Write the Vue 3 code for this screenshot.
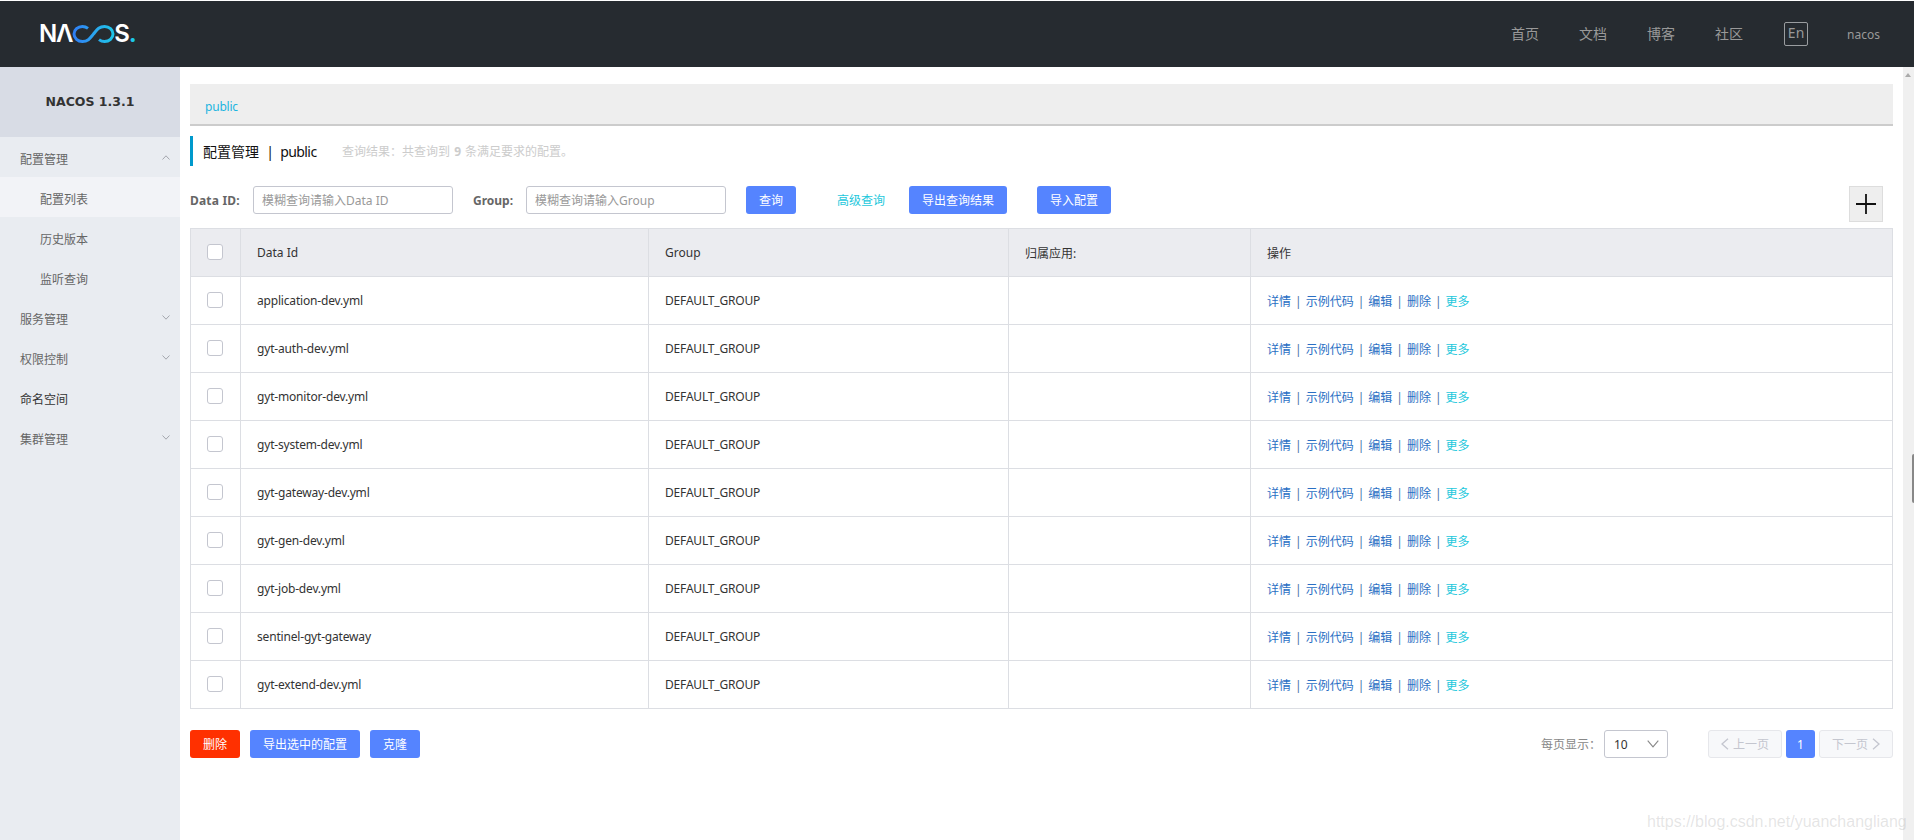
<script setup>
const nav = ['首页', '文档', '博客', '社区']
const rows = [
  'application-dev.yml', 'gyt-auth-dev.yml', 'gyt-monitor-dev.yml', 'gyt-system-dev.yml',
  'gyt-gateway-dev.yml', 'gyt-gen-dev.yml', 'gyt-job-dev.yml', 'sentinel-gyt-gateway', 'gyt-extend-dev.yml'
]
const actions = ['详情', '示例代码', '编辑', '删除']
const menu = [
  { label: '配置管理', arrow: 'up', top: true },
  { label: '配置列表', sub: true, active: true },
  { label: '历史版本', sub: true },
  { label: '监听查询', sub: true },
  { label: '服务管理', arrow: 'down' },
  { label: '权限控制', arrow: 'down' },
  { label: '命名空间', plain: true },
  { label: '集群管理', arrow: 'down' }
]
</script>

<template>
  <div class="page">
    <header class="top">
      <div class="logo">
        <span class="logo-t">NΛ</span>
        <svg class="inf" width="43" height="18" viewBox="0 0 43 18" fill="none">
          <defs>
            <linearGradient id="lg" x1="0" y1="0" x2="43" y2="0" gradientUnits="userSpaceOnUse">
              <stop offset="0" stop-color="#2f7bf5" />
              <stop offset="0.55" stop-color="#2aa8ee" />
              <stop offset="1" stop-color="#1cc8e8" />
            </linearGradient>
          </defs>
          <path d="M16 3.400C14.300 2.100 12.400 1.500 10.400 1.500 5.800 1.500 2 4.900 2 9s3.800 7.500 8.400 7.500c6 0 8.100-3.900 11.100-7.500s5.100-7.500 11.100-7.500C37.200 1.500 41 4.900 41 9s-3.800 7.500-8.400 7.500c-2 0-3.900-.6-5.600-1.900" stroke="url(#lg)" stroke-width="3" />
        </svg>
        <span class="logo-t logo-s">S</span><span class="logo-dot">.</span>
      </div>
      <nav class="nav">
        <a v-for="n in nav" :key="n" class="nav-link">{{ n }}</a>
        <span class="lang">En</span>
        <span class="user">nacos</span>
      </nav>
    </header>

    <div class="body">
      <aside class="side">
        <div class="side-head">NACOS 1.3.1</div>
        <div
          v-for="m in menu"
          :key="m.label"
          class="side-item"
          :class="{ sub: m.sub, active: m.active, plain: m.plain }"
        >
          <span class="side-label">{{ m.label }}</span>
          <svg v-if="m.arrow" class="side-arrow" width="8" height="5" viewBox="0 0 8 5" fill="none">
            <path v-if="m.arrow === 'up'" d="M.5 4.500L4 .8l3.500 3.700" stroke="#a3a6ad" />
            <path v-else d="M.5.5L4 4.200 7.500.5" stroke="#a3a6ad" />
          </svg>
        </div>
      </aside>

      <main class="main">
        <div class="ns-bar"><span class="ns">public</span></div>

        <div class="title">
          <span class="title-main">配置管理&nbsp;&nbsp;|&nbsp;&nbsp;<span class="tight">public</span></span>
          <span class="title-sub">查询结果：共查询到 <b>9</b> 条满足要求的配置。</span>
        </div>

        <div class="search">
          <label class="lbl lbl-id">Data ID:</label>
          <input class="inp" placeholder="模糊查询请输入Data ID" />
          <label class="lbl lbl-group">Group:</label>
          <input class="inp" placeholder="模糊查询请输入Group" />
          <button class="btn btn-query">查询</button>
          <a class="adv">高级查询</a>
          <button class="btn btn-export">导出查询结果</button>
          <button class="btn btn-import">导入配置</button>
          <button class="plus" aria-label="add">
            <svg width="20" height="20" viewBox="0 0 20 20"><path d="M0 10h20M10 0v20" stroke="#111" stroke-width="1.800" /></svg>
          </button>
        </div>

        <table class="tbl">
          <colgroup>
            <col class="c0" /><col class="c1" /><col class="c2" /><col class="c3" /><col />
          </colgroup>
          <thead>
            <tr>
              <th><span class="check"></span></th>
              <th>Data Id</th>
              <th>Group</th>
              <th>归属应用:</th>
              <th>操作</th>
            </tr>
          </thead>
          <tbody>
            <tr v-for="r in rows" :key="r">
              <td><span class="check"></span></td>
              <td class="tight">{{ r }}</td>
              <td class="tight">DEFAULT_GROUP</td>
              <td></td>
              <td>
                <template v-for="a in actions" :key="a">
                  <a class="act">{{ a }}</a><span class="sep">|</span>
                </template>
                <a class="more">更多</a>
              </td>
            </tr>
          </tbody>
        </table>

        <div class="foot">
          <button class="btn btn-del">删除</button>
          <button class="btn btn-exp2">导出选中的配置</button>
          <button class="btn btn-clone">克隆</button>
          <span class="per">每页显示：</span>
          <div class="select">
            <span>10</span>
            <svg width="12" height="8" viewBox="0 0 12 8" fill="none"><path d="M.7.7L6 6.800 11.300.7" stroke="#888" stroke-width="1.100" /></svg>
          </div>
          <button class="pg pg-prev">
            <svg width="8" height="12" viewBox="0 0 8 12" fill="none"><path d="M7 .7L1 6l6 5.300" stroke="#c4c6cf" stroke-width="1.300" /></svg>
            上一页
          </button>
          <button class="pg-cur">1</button>
          <button class="pg">
            下一页
            <svg width="8" height="12" viewBox="0 0 8 12" fill="none"><path d="M1 .7L7 6l-6 5.300" stroke="#c4c6cf" stroke-width="1.300" /></svg>
          </button>
        </div>
      </main>
    </div>

    <div class="scrollbar">
      <span class="sb-up"></span>
      <span class="sb-thumb"></span>
    </div>
    <div class="watermark">https://blog.csdn.net/yuanchangliang</div>
  </div>
</template>

<style>
html, body { margin: 0; padding: 0; overflow: hidden; background: #fff; }
</style>

<style scoped>
.page {
  position: relative;
  width: 1914px;
  height: 840px;
  overflow: hidden;
  box-sizing: border-box;
  padding-top: 1px;
  background: #fff;
  font-family: "Noto Sans", "Noto Sans CJK SC", sans-serif;
  font-size: 12px;
  color: #333;
}
.tight { letter-spacing: -0.18px; }
.top {
  height: 66px;
  background: #262b30;
  display: flex;
  align-items: center;
  justify-content: space-between;
  padding: 0 34px 0 39px;
}
.logo {
  display: flex;
  align-items: center;
  height: 18px;
  color: #fff;
}
.logo-t {
  font-family: "Inter", sans-serif;
  font-weight: 600;
  font-size: 24px;
  line-height: 18px;
  letter-spacing: -1.200px;
}
.inf { display: block; margin: 0; }
.logo-s { margin-left: -1px; }
.logo-dot {
  font-family: "Inter", sans-serif;
  font-weight: 700;
  font-size: 24px;
  line-height: 18px;
  color: #1cc8e8;
}
.nav { display: flex; align-items: center; color: #999; }
.nav-link { font-size: 14px; width: 29px; margin-right: 39px; margin-top: -2px; white-space: nowrap; }
.lang {
  box-sizing: border-box;
  width: 24px;
  height: 24px;
  margin-left: 1px;
  margin-right: 39px;
  border: 1px solid #9a9da0;
  border-radius: 2px;
  font-size: 14px;
  line-height: 20px;
  text-align: center;
}
.user { font-size: 12px; }

.body { display: flex; height: 773px; }
.side { width: 180px; flex: none; background: #e9ecf1; color: #666; }
.side-head {
  height: 70px;
  line-height: 70px;
  background: #d8dce5;
  text-align: center;
  font-family: "DejaVu Sans", sans-serif;
  font-weight: 700;
  font-size: 12.500px;
  color: #333;
}
.side-item {
  height: 40px;
  display: flex;
  align-items: center;
  justify-content: space-between;
  padding: 0 10px 0 20px;
}
.side-label { padding-top: 4px; }
.side-item.sub { padding-left: 40px; }
.side-item.active { background: #f2f3f7; }
.side-item.plain { color: #333; }

.main { flex: 1; min-width: 0; box-sizing: border-box; padding: 17px 21px 0 10px; }
.ns-bar {
  height: 42px;
  box-sizing: border-box;
  background: #eee;
  border-bottom: 2px solid #ccc;
  padding: 4px 0 0 15px;
  display: flex;
  align-items: center;
}
.ns { color: #1cb5e0; letter-spacing: -0.2px; }
.title {
  margin-top: 10px;
  height: 30px;
  border-left: 3px solid #09c;
  padding-left: 10px;
  display: flex;
  align-items: center;
}
.title-main { font-size: 14px; color: #111; width: 139px; white-space: nowrap; }
.title-main .tight { letter-spacing: -0.6px; margin-left: -1px; }
.title-sub { color: #ccc; }
.title-sub b { font-weight: 700; margin: 0 1px; }

.search { display: flex; align-items: center; margin-top: 20px; position: relative; height: 28px; }
.lbl { font-weight: 700; color: #666; white-space: nowrap; }
.lbl-id { width: 63px; letter-spacing: 0.2px; }
.lbl-group { width: 53px; margin-left: 20px; }
.inp {
  box-sizing: border-box;
  width: 200px;
  height: 28px;
  border: 1px solid #c4c6cf;
  border-radius: 3px;
  padding: 0 8px;
  font: inherit;
  outline: none;
}
.inp::placeholder { color: #999; }
.btn {
  border: 0;
  height: 28px;
  border-radius: 3px;
  background: #5584ff;
  color: #fff;
  font: inherit;
  padding: 0;
  display: block;
}
.btn-query { width: 50px; margin-left: 20px; }
.adv { color: #1dc8dc; margin-left: 41px; width: 72px; white-space: nowrap; }
.btn-export { width: 98px; }
.btn-import { width: 74px; margin-left: 30px; }
.plus {
  margin-left: auto;
  margin-right: 10px;
  margin-top: 8px;
  box-sizing: border-box;
  width: 34px;
  height: 36px;
  padding: 0;
  background: #eee;
  border: 1px solid #ddd;
  display: flex;
  align-items: center;
  justify-content: center;
}

.tbl {
  margin-top: 14px;
  width: 1703px;
  table-layout: fixed;
  border-collapse: collapse;
  border: 1px solid #dcdee3;
  color: #333;
}
.c0 { width: 50px; }
.c1 { width: 408px; }
.c2 { width: 360px; }
.c3 { width: 242px; }
.tbl th, .tbl td {
  box-sizing: border-box;
  height: 48px;
  padding: 0 16px;
  border: 1px solid #dcdee3;
  text-align: left;
  font-weight: 400;
  white-space: nowrap;
}
.tbl th { background: #ebecf0; }
.tbl th:first-child, .tbl td:first-child { padding: 0 0 0 16px; }
.check {
  display: block;
  box-sizing: border-box;
  width: 16px;
  height: 16px;
  border: 1px solid #c4c6cf;
  border-radius: 3px;
  background: #fff;
  margin-top: -2px;
}
.act { color: #2a6fc4; }
.sep { margin: 0 4px; color: #4a74a8; }
.more { color: #1dc8dc; }

.foot { display: flex; align-items: center; margin-top: 21px; }
.btn-del { width: 50px; background: #ff3000; }
.btn-exp2 { width: 110px; margin-left: 10px; }
.btn-clone { width: 50px; margin-left: 10px; }
.per { margin-left: auto; color: #888; width: 63px; white-space: nowrap; }
.select {
  box-sizing: border-box;
  width: 64px;
  height: 28px;
  border: 1px solid #c4c6cf;
  border-radius: 3px;
  padding: 0 8px 0 9px;
  display: flex;
  align-items: center;
  justify-content: space-between;
  margin-right: 40px;
}
.pg {
  box-sizing: border-box;
  width: 74px;
  height: 28px;
  background: #f7f8fa;
  border: 1px solid #e6e7eb;
  border-radius: 3px;
  color: #c4c6cf;
  font: inherit;
  padding: 0;
  display: flex;
  align-items: center;
  justify-content: center;
  gap: 4px;
}
.pg-cur {
  width: 29px;
  height: 28px;
  margin: 0 4px;
  border: 0;
  border-radius: 3px;
  background: #5584ff;
  color: #fff;
  font: inherit;
  padding: 0;
}

.scrollbar {
  position: absolute;
  right: 0;
  top: 67px;
  bottom: 0;
  width: 11px;
  background: #f0f0f0;
}
.sb-up {
  position: absolute;
  left: 2px;
  top: 6px;
  border-left: 3px solid transparent;
  border-right: 3px solid transparent;
  border-bottom: 4px solid #aaa;
}
.sb-thumb {
  position: absolute;
  right: 0;
  top: 387px;
  width: 2px;
  height: 49px;
  background: #888;
  border-radius: 2px 0 0 2px;
}
.watermark {
  position: absolute;
  left: 1647px;
  top: 810px;
  font-family: "Liberation Sans", sans-serif;
  font-size: 16px;
  line-height: 24px;
  color: rgba(160, 160, 160, 0.28);
  white-space: nowrap;
}
</style>
